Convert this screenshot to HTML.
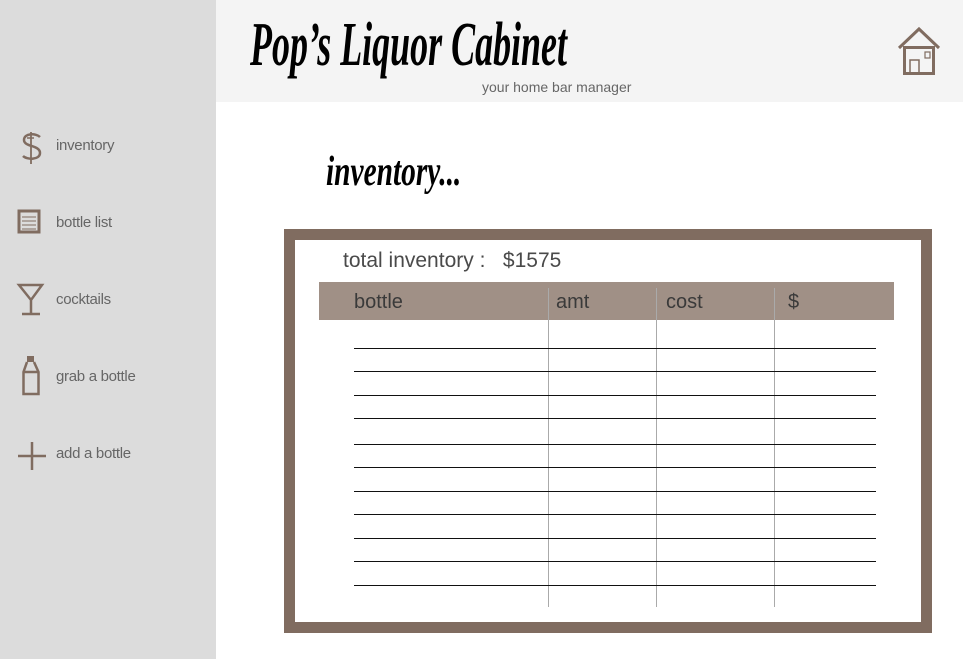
<!DOCTYPE html>
<html><head><style>
body{margin:0;width:963px;height:659px;position:relative;overflow:hidden;background:#fff;font-family:"Liberation Sans",sans-serif;}
.side{position:absolute;left:0;top:0;width:216px;height:659px;background:#dcdcdc;}
.hdr{position:absolute;left:216px;top:0;width:747px;height:102px;background:#f4f4f4;}
.t{position:absolute;white-space:nowrap;transform-origin:0 0;}
.nav{position:absolute;left:56px;font-size:15px;color:#666;letter-spacing:-0.3px;}
.hl{position:absolute;left:354px;width:522px;height:1px;background:#111;}
.vl{position:absolute;top:288px;height:319px;width:1px;background:#aaa;}
.th{position:absolute;top:291px;font-size:20px;color:#3a3a3a;}
</style></head><body>
<div class="side"></div>
<div class="hdr"></div>
<div class="t" style="left:250px;top:10px;font:italic bold 62px 'Liberation Serif',serif;transform:scaleX(0.58);color:#000;">Pop’s Liquor Cabinet</div>
<div class="t" style="left:482px;top:79px;font-size:14px;color:#666;">your home bar manager</div>
<div class="t" style="left:326px;top:148px;font:italic bold 42px 'Liberation Serif',serif;transform:scaleX(0.7);color:#000;">inventory...</div>
<svg style="position:absolute;left:896px;top:26px" width="46" height="50" viewBox="0 0 46 50">
<path d="M3 22 L23 3 L43 22" fill="none" stroke="#806c60" stroke-width="3"/>
<rect x="8.5" y="21.5" width="29" height="26" fill="none" stroke="#806c60" stroke-width="3"/>
<rect x="14" y="34" width="9" height="13" fill="none" stroke="#806c60" stroke-width="1.5"/>
<rect x="29" y="26" width="5" height="6" fill="none" stroke="#806c60" stroke-width="1.2"/>
</svg>
<svg style="position:absolute;left:16px;top:130px" width="34" height="340" viewBox="0 0 34 340">
<g fill="none" stroke="#806c60">
<path d="M24 7 C20 3 8 3 8 10 C8 17 24 15 24 23 C24 30 11 30 7 26" stroke-width="2.5"/>
<path d="M15 2 V34" stroke-width="1.8"/><path d="M11 8 H18" stroke-width="1.5"/>
<rect x="3" y="81" width="20" height="21" stroke-width="3"/>
<path d="M6 87 H20 M6 91 H20 M6 95 H20 M6 99 H20" stroke-width="1"/>
<path d="M3 155 H26 L15 170 Z M15 170 V184 M6 184 H24" stroke-width="2.5"/>
<rect x="11" y="226" width="7" height="6" fill="#806c60" stroke="none"/>
<path d="M11 232 L7.5 242 V264 H22.5 V242 L18 232 M7.5 242 H22.5" stroke-width="2.5"/>
<path d="M2 326 H30 M16 312 V340" stroke-width="2.5"/>
</g></svg>
<div class="nav" style="top:137px">inventory</div>
<div class="nav" style="top:214px">bottle list</div>
<div class="nav" style="top:291px">cocktails</div>
<div class="nav" style="top:368px">grab a bottle</div>
<div class="nav" style="top:445px">add a bottle</div>
<div style="position:absolute;left:284px;top:229px;width:626px;height:382px;border:11px solid #806c60;background:#fff;"></div>
<div class="t" style="left:343px;top:249px;font-size:21px;color:#4a4a4a;">total inventory :&nbsp;&nbsp; $1575</div>
<div style="position:absolute;left:319px;top:282px;width:575px;height:38px;background:#a09086;"></div>
<div class="th" style="left:354px">bottle</div>
<div class="th" style="left:556px">amt</div>
<div class="th" style="left:666px">cost</div>
<div class="th" style="left:788px">$</div>
<div class="vl" style="left:548px"></div><div class="vl" style="left:656px"></div><div class="vl" style="left:774px"></div>
<div class="hl" style="top:348px"></div><div class="hl" style="top:371px"></div><div class="hl" style="top:395px"></div>
<div class="hl" style="top:418px"></div><div class="hl" style="top:444px"></div><div class="hl" style="top:467px"></div>
<div class="hl" style="top:491px"></div><div class="hl" style="top:514px"></div><div class="hl" style="top:538px"></div>
<div class="hl" style="top:561px"></div><div class="hl" style="top:585px"></div>
</body></html>
